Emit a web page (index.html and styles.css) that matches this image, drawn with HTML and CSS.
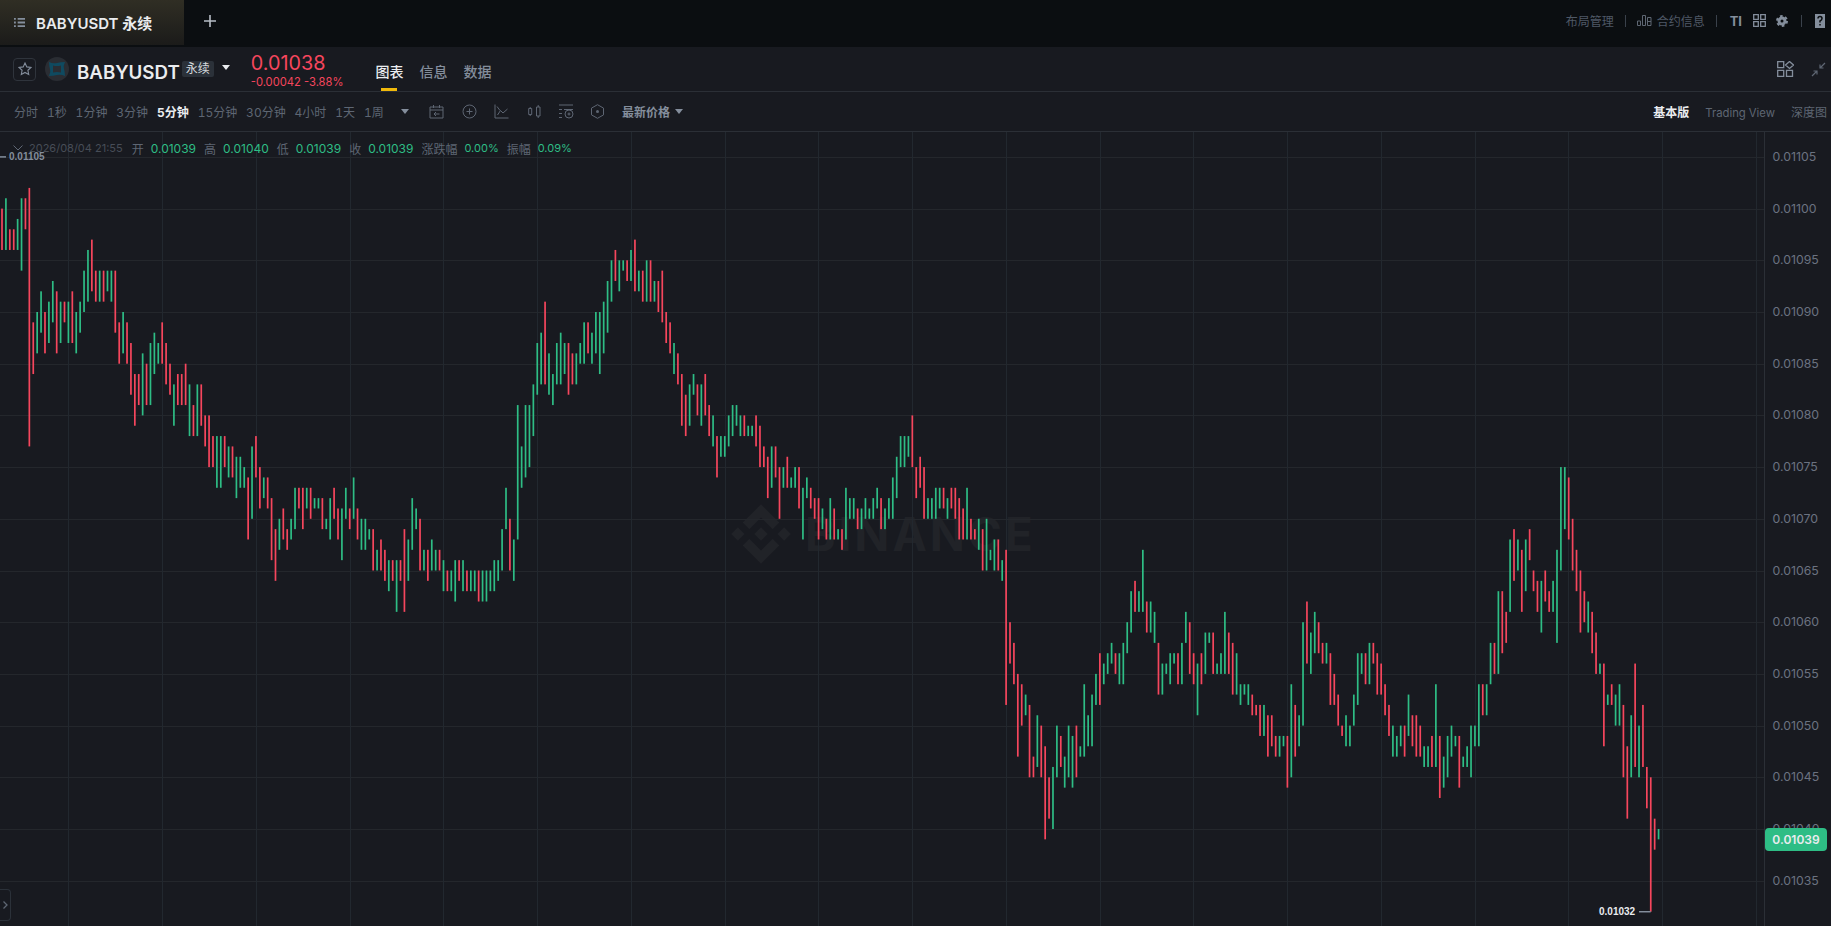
FILE: index.html
```html
<!DOCTYPE html>
<html lang="zh-CN">
  <head>
    <meta charset="UTF-8" />
    <meta name="viewport" content="width=device-width, initial-scale=1.0" />
    <title>BABYUSDT 永续</title>
    <link rel="stylesheet" href="styles.css">
  </head>
  <body>
    <!-- 顶部标签栏 -->
    <div class="topbar">
      <div class="tab">
        <svg class="ico-list" viewBox="0 0 12 11">
          <path d="M0 0.5h2v2H0zM4 0.5h8v2H4zM0 4.5h2v2H0zM4 4.5h8v2H4zM0 8.5h2v2H0zM4 8.5h8v2H4z" />
        </svg>
        <span class="tab-name">BABYUSDT 永续</span>
      </div>
      <svg class="ico-plus" viewBox="0 0 12 12"><path d="M6 0v12M0 6h12" /></svg>
      <div class="top-right">
        <span>布局管理</span>
        <i class="divider"></i>
        <svg class="ico-bars" viewBox="0 0 15 11">
          <path d="M0.5 6h3v4.5h-3zM5.5 0.5h3v10h-3zM10.5 2.5h3.5v8h-3.5zM10.5 6.5h3.5" />
        </svg>
        <span class="info-text">合约信息</span>
        <i class="divider"></i>
        <b class="ti">TI</b>
        <svg class="ico-grid" viewBox="0 0 13 13">
          <path d="M0.7 0.7h4.6v4.6H0.7zM7.7 0.7h4.6v4.6H7.7zM0.7 7.7h4.6v4.6H0.7zM7.7 7.7h4.6v4.6H7.7z" />
        </svg>
        <svg class="ico-gear" viewBox="0 0 12 12">
          <circle class="gear-teeth" cx="6" cy="6" r="5" />
          <circle class="gear-ring" cx="6" cy="6" r="3" />
        </svg>
        <i class="divider"></i>
        <svg class="ico-doc" viewBox="0 0 10 14">
          <path class="doc-back" d="M0 0h10v14H0z" />
          <path class="doc-mark" d="M3 4.5Q3 2.5 5 2.5T7 4.5Q7 6 5 7V8.5M5 10v1.5" />
        </svg>
      </div>
    </div>

    <div class="panel">
      <!-- 合约信息行 -->
      <div class="header">
        <div class="star">
          <svg viewBox="0 0 14 14"><path d="M7 1l1.8 3.9 4.2.5-3.1 2.9.8 4.2L7 10.4l-3.7 2.1.8-4.2L1 5.4l4.2-.5z" /></svg>
        </div>
        <svg class="coin" viewBox="0 0 24 24">
          <circle class="coin-back" cx="12" cy="12" r="12" />
          <path class="coin-mark" d="M4 5q4 2 8 1t8-1q-2 4-1 7t1 7q-4-2-8-1t-8 1q2-4 1-7T4 5zM8 8.500v7q4-1 8 0v-7q-4 1-8 0z" />
        </svg>
        <span class="symbol">BABYUSDT</span>
        <span class="perp">永续</span>
        <i class="caret-white"></i>
        <div class="quote">
          <div class="last-price">0.01038</div>
          <div class="change">-0.00042 -3.88%</div>
        </div>
        <div class="head-tabs">
          <span class="head-tab active">图表</span>
          <span class="head-tab">信息</span>
          <span class="head-tab">数据</span>
        </div>
        <div class="head-right">
          <svg class="ico-layout" viewBox="0 0 17 16">
            <path d="M0.700 0.700h6v6h-6zM12.500 0.500l4 3.500-4 3.500-4-3.500zM0.700 9.300h6v6h-6zM9.500 9.300h6v6h-6z" />
          </svg>
          <svg class="ico-shrink" viewBox="0 0 15 15">
            <path d="M14 1L9 6M9 2.500V6h3.500M1 14l5-5M6 12.500V9H2.500" />
          </svg>
        </div>
      </div>

      <!-- 周期工具栏 -->
      <div class="toolbar">
        <span>分时</span>
        <span>1秒</span>
        <span>1分钟</span>
        <span>3分钟</span>
        <span class="on">5分钟</span>
        <span>15分钟</span>
        <span>30分钟</span>
        <span>4小时</span>
        <span>1天</span>
        <span>1周</span>
        <i class="caret caret-more"></i>
        <svg class="tool first" viewBox="0 0 15 15">
          <path d="M1 3h13v11H1zM1 6h13M4.500 1v3M10.500 1v3M10.500 10H5M7 8l-2 2 2 2" />
        </svg>
        <svg class="tool" viewBox="0 0 15 15">
          <circle cx="7.500" cy="7.500" r="6.500" />
          <path d="M7.500 4.500v6M4.500 7.500h6" />
        </svg>
        <svg class="tool" viewBox="0 0 15 15">
          <path d="M1 0.500V14h13.500M3.500 11L6.500 6.500 9 9l4.500-4M3 2.500l3 4" />
        </svg>
        <svg class="tool" viewBox="0 0 13 15">
          <path d="M0.700 4.500h3v6h-3zM2.200 3v1.500M2.200 10.500V12M8.500 3h3.500v9H8.500zM10.200 1v2M10.200 12v2" />
        </svg>
        <svg class="tool" viewBox="0 0 15 15">
          <path d="M0 1h14M5 5.500h9M0 5.500h3M0 9.500h3M0 13.500h3" />
          <circle cx="10" cy="10" r="4" />
          <path d="M10 8.500v3M8.500 10h3" />
        </svg>
        <svg class="tool last" viewBox="0 0 14 15">
          <path d="M7 0.700l6 3.400v6.800l-6 3.400-6-3.400V4.100z" />
          <circle class="dot" cx="7" cy="7.500" r="1.500" />
        </svg>
        <span class="price-type">最新价格</span>
        <i class="caret"></i>
        <div class="views">
          <span class="on">基本版</span>
          <span class="view-latin">Trading View</span>
          <span>深度图</span>
        </div>
      </div>

      <!-- K线区 -->
      <div class="chart">
        <div class="watermark">
          <svg viewBox="0 0 60 60">
            <path d="M18.400 25.200 30 13.600 41.600 25.200 48.300 18.500 30 .2 11.700 18.500zM18.400 34.800 30 46.400 41.600 34.800 48.300 41.500 30 59.800 11.700 41.500zM.2 30 6.900 23.300 13.600 30 6.900 36.700zM46.400 30 53.100 23.300 59.800 30 53.100 36.700zM23.200 30 30 23.200 36.800 30 30 36.800z" />
          </svg>
          <span>BINANCE</span>
        </div>
        <svg class="plot" id="plot"></svg>
        <div class="legend">
          <svg class="ico-fold" viewBox="0 0 10 6"><path d="M0.500 0.500L5 5l4.500-4.500" /></svg>
          <span class="time">2026/08/04 21:55</span>
          <span>开</span><em>0.01039</em>
          <span>高</span><em>0.01040</em>
          <span>低</span><em>0.01039</em>
          <span>收</span><em>0.01039</em>
          <span>涨跌幅</span><em class="pct">0.00%</em>
          <span>振幅</span><em class="pct">0.09%</em>
        </div>
        <div class="price-tag">0.01039</div>
        <div class="side-toggle">
          <svg viewBox="0 0 5 8"><path d="M0.500 0.500L4 4 0.500 7.500" /></svg>
        </div>
      </div>
    </div>
    <script src="chart.js"></script>
  </body>
</html>
```

FILE: styles.css
```css
* {
  margin: 0;
  padding: 0;
  box-sizing: border-box;
}
html,
body {
  height: 100%;
  overflow: hidden;
}
body {
  display: flex;
  flex-direction: column;
  background-color: #0b0e11;
  font-family: Inter, "Noto Sans CJK SC", sans-serif;
  font-size: 12px;
  color: #848e9c;
}
svg {
  display: block;
  flex: none;
}
i,
em {
  font-style: normal;
}

/* 顶部标签栏 */
.topbar {
  display: flex;
  align-items: flex-start;
  height: 47px;
  flex: none;
}
.tab {
  display: flex;
  align-items: center;
  width: 184px;
  height: 45px;
  padding-left: 14px;
  background: linear-gradient(#302e24, #1b1b1a);
}
.ico-list {
  width: 11px;
  height: 11px;
  fill: #848e9c;
}
.tab-name {
  margin-left: 11px;
  font-size: 15px;
  font-weight: 600;
  color: #eaecef;
}
.ico-plus {
  width: 12px;
  height: 12px;
  margin: 15px 0 0 20px;
  fill: none;
  stroke: #b7bdc6;
  stroke-width: 1.600;
}
.top-right {
  display: flex;
  align-items: center;
  gap: 11px;
  height: 41px;
  margin-left: auto;
  padding-right: 6px;
  color: #4f5866;
}
.divider {
  width: 1px;
  height: 12px;
  background-color: #3a414b;
}
.ico-bars {
  width: 15px;
  height: 11px;
  margin-right: -6px;
  fill: none;
  stroke: #5e6673;
}
.ti {
  margin-left: 2px;
  font-size: 13px;
  font-weight: 700;
  color: #848e9c;
}
.ico-grid {
  width: 13px;
  height: 13px;
  fill: none;
  stroke: #848e9c;
  stroke-width: 1.300;
}
.ico-gear {
  width: 12px;
  height: 12px;
  margin: 0 2px 0 -1px;
}
.gear-teeth {
  fill: none;
  stroke: #848e9c;
  stroke-width: 2;
  stroke-dasharray: 2.600 2.630;
}
.gear-ring {
  fill: #0b0e11;
  stroke: #848e9c;
  stroke-width: 3;
}
.ico-doc {
  width: 10px;
  height: 14px;
  margin-left: 2px;
}
.doc-back {
  fill: #848e9c;
}
.doc-mark {
  fill: none;
  stroke: #0b0e11;
  stroke-width: 1.500;
}

/* 面板 */
.panel {
  display: flex;
  flex-direction: column;
  flex: 1;
  min-height: 0;
  background-color: #181a20;
}
.header {
  display: flex;
  align-items: center;
  height: 45px;
  flex: none;
  padding-left: 13px;
  border-bottom: 1px solid #2b2f36;
}
.star {
  display: flex;
  align-items: center;
  justify-content: center;
  width: 23px;
  height: 23px;
  margin: 0 9px 0 0;
  border: 1px solid #2f343c;
  border-radius: 4px;
}
.star svg {
  width: 14px;
  height: 14px;
  fill: none;
  stroke: #848e9c;
  stroke-width: 1.100;
}
.coin {
  width: 24px;
  height: 24px;
}
.coin-back {
  fill: #2a2d33;
}
.coin-mark {
  fill: #0f4a60;
  fill-rule: evenodd;
}
.symbol {
  margin: 6px 0 0 8px;
  font-size: 18.700px;
  font-weight: 600;
  color: #eaecef;
}
.perp {
  margin: -1px 0 0 2px;
  padding: 0 4px;
  height: 16px;
  line-height: 16px;
  border-radius: 2px;
  background-color: #2b3139;
  color: #d5d8dc;
}
.caret-white {
  width: 0;
  height: 0;
  margin: -3px 0 0 8px;
  border-left: 4.500px solid transparent;
  border-right: 4.500px solid transparent;
  border-top: 5px solid #eaecef;
}
.quote {
  margin: 3px 0 0 21px;
  color: #f6465d;
}
.last-price {
  font-size: 19.800px;
  line-height: 24px;
}
.change {
  line-height: 15px;
  font-size: 11.200px;
}
.head-tabs {
  display: flex;
  gap: 16px;
  margin: 5px 0 0 32px;
}
.head-tab {
  position: relative;
  height: 39px;
  line-height: 40px;
  font-size: 14px;
  font-weight: 500;
}
.head-tab.active {
  color: #eaecef;
}
.head-tab.active::after {
  content: "";
  position: absolute;
  left: 6px;
  right: 6px;
  bottom: 0;
  height: 3px;
  background-color: #f0b90b;
}
.head-right {
  display: flex;
  align-items: center;
  gap: 17px;
  margin: 0 5px 0 auto;
}
.ico-layout {
  width: 17px;
  height: 16px;
  fill: none;
  stroke: #848e9c;
  stroke-width: 1.300;
}
.ico-shrink {
  width: 15px;
  height: 15px;
  fill: none;
  stroke: #5e6673;
  stroke-width: 1.200;
}

.toolbar {
  display: flex;
  align-items: center;
  gap: 8.900px;
  height: 40px;
  flex: none;
  padding-left: 14px;
  border-bottom: 1px solid #2b2f36;
  color: #5e6673;
  font-variant-numeric: tabular-nums;
}
.toolbar .on {
  color: #eaecef;
  font-weight: 700;
}
.caret {
  width: 0;
  height: 0;
  margin-left: -4px;
  border-left: 4px solid transparent;
  border-right: 4px solid transparent;
  border-top: 5px solid #848e9c;
}
.caret-more {
  margin-left: 8px;
}
.tool {
  width: 15px;
  height: 15px;
  margin-left: 8.600px;
  fill: none;
  stroke: #5e6673;
}
.tool.first {
  margin-left: 11.600px;
}
.tool.last {
  margin-left: 6.600px;
}
.tool .dot {
  fill: #5e6673;
  stroke: none;
}
.price-type {
  margin-left: 8.600px;
  font-weight: 600;
  color: #848e9c;
}
.views {
  display: flex;
  align-items: baseline;
  gap: 16px;
  margin-left: auto;
  padding-right: 4px;
}
.view-latin {
  font-size: 11.300px;
}

/* K线区 */
.chart {
  position: relative;
  flex: 1;
  min-height: 0;
}
.plot {
  position: absolute;
  top: 0;
  left: 0;
  width: 100%;
  height: 100%;
}
.watermark {
  position: absolute;
  left: 731px;
  top: 372px;
  display: flex;
  align-items: center;
  gap: 14px;
  font-size: 46px;
  line-height: 60px;
  font-weight: 700;
  letter-spacing: 3px;
  color: #212328;
}
.watermark svg {
  width: 60px;
  height: 60px;
  fill: #212328;
}
.legend {
  position: absolute;
  left: 13px;
  top: 8px;
  display: flex;
  align-items: center;
  height: 16px;
  color: #5e6673;
}
.legend span {
  margin-right: 7px;
}
.legend em {
  margin-right: 8px;
  color: #2ebd85;
}
.legend .pct {
  font-size: 11px;
}
.legend .time {
  margin-right: 9px;
  font-size: 11px;
  color: #474d57;
}
.ico-fold {
  width: 10px;
  height: 6px;
  margin-right: 6px;
  fill: none;
  stroke: #5e6673;
}
.price-tag {
  position: absolute;
  left: 1765px;
  top: 696px;
  width: 62px;
  height: 23px;
  line-height: 23px;
  text-align: center;
  border-radius: 4px;
  background-color: #2ebd85;
  font-weight: 600;
  color: #eaecef;
}
.side-toggle {
  position: absolute;
  left: 0;
  bottom: 5px;
  display: flex;
  align-items: center;
  justify-content: center;
  width: 11px;
  height: 32px;
  border: 1px solid #2b3139;
  border-left: 0;
  border-radius: 0 4px 4px 0;
}
.side-toggle svg {
  width: 5px;
  height: 8px;
  fill: none;
  stroke: #5e6673;
  stroke-width: 1.300;
}

/* svg内容由chart.js生成 */
.grid-h {
  stroke: #24272c;
}
.grid-v {
  stroke: #22282f;
}
.axis-line {
  stroke: #2b2f36;
}
.axis-text {
  font-size: 12.300px;
  fill: #6b7280;
}
.bar-g {
  fill: #2ebd85;
}
.bar-r {
  fill: #f6465d;
}
.mark-line {
  stroke: #848e9c;
  stroke-width: 1.500;
}
.mark-text {
  font-family: "Liberation Sans", sans-serif;
  font-size: 10px;
  font-weight: 700;
}
.mark-high {
  fill: #848e9c;
}
.mark-low {
  fill: #eaecef;
}
```

FILE: chart.js
```js
// 高低价 单位0.00001 减去1000，g涨 r跌
const raw = `
r100-96 g101-96 r98-96 r98-96 g99-96 g101-94 r101-98 r102-77
r89-84 g90-86 g92-88 r90-86 g91-87 g93-89 r92-86 g91-87
r91-89 g91-87 r92-87 g90-86 g91-88 g94-90 g96-91 r97-92
r94-91 g94-91 r94-91 g94-92 g94-91 r94-88 r89-85 g90-86
r89-85 r87-82 r84-79 r84-81 g86-80 r85-81 g87-81 g88-84
g87-85 r89-85 r87-83 r85-82 g83-79 r84-81 r84-81 r85-81
g83-78 r81-78 g83-78 r83-79 r80-77 r80-75 r78-75 g78-73
g78-73 r78-75 g77-74 r77-74 g76-72 g76-73 g75-73 r74-68
g77-70 r78-74 r75-71 g74-72 r74-71 r72-66 r69-64 g70-67
r71-68 r69-67 g70-68 g73-69 r73-71 r73-69 g73-71 r73-70
g72-71 g72-71 r72-69 g70-69 g72-68 r73-70 r71-68 g71-66
g73-70 r71-69 g74-70 r71-68 g70-67 g70-67 g69-68 r69-65
g67-65 r68-65 r67-64 g66-63 r66-64 g66-61 r66-64 r69-61
g68-64 g72-67 g71-69
r70-65 g67-65 r67-64 g68-65 g67-65 r67-65 g66-63 r65-63
g65-63 g66-62 r66-64 g66-63 r65-63 g65-63 g65-63 r65-62
g65-62 g65-62 g65-63 g66-63 g66-64 g69-65 g73-69 r70-65
g68-64 g81-68 g77-73 g81-74 g81-75 g83-78 g87-82 g88-83
r91-83 g86-82 g84-81 g87-83 g88-83 g87-84 r87-82 r86-83
g86-83 g87-85 g89-85 r89-86 g88-85 g90-86 g90-84 g91-86
g93-88 g95-91 r96-93 g95-92 g95-94 r95-93 g96-93 r97-92
g94-92 r94-91 g95-91 r95-91 g93-91 r93-90 r94-89 r90-87
r89-86 g87-84 r86-83 r84-79 r82-78 g83-79 g84-82 r83-80
g83-79 r84-80 r81-78 g80-77 r78-74 g78-76 g78-76 g80-77
g81-78 g81-79 g80-78 r80-78 g79-78 g79-78 r80-77 r79-75
r77-75 r76-72 g77-73 r77-74 r75-70 g75-73 r76-73 g74-73
g75-73 r75-71 g73-68 g74-72 r73-71 r72-70 r72-68 g71-69
r70-68 g72-68 r71-68 g69-68
r69-67 g73-68 g72-70 g72-70 r71-69 g71-69 g72-70 g71-70
g72-70 g73-71 r72-69 g71-69 g72-70 g74-70 g76-72 g78-75
g78-75 g78-76 r80-75 r75-72 r76-73 r75-70 g72-70 g72-70
g73-70 g73-71 r73-71 g72-70 r73-71 r73-70 r72-68 r71-68
g73-68 r70-68 r69-68 g70-67 r69-65 g70-65 g67-66 g68-65
r68-65 g66-64 r67-52 r60-56 r58-54 r55-47 r54-50 g53-51
r52-45 r47-45 g51-46 r50-45 r48-39 r45-41 g46-40 g50-45
r49-46 g47-44 g50-45 g49-44 r50-45 g48-47 g54-47 g51-48
g53-48 g55-52 r57-52 g56-54 g57-55 g58-56 r57-55 g57-54
g58-54 g60-57 g63-59 r64-61 g63-61 g67-61 r62-59 g62-59
g61-58 r58-53 g56-53 g56-55 g57-54 g57-56 r57-54 g58-54
g61-58 r60-55 r57-54 g56-51 r57-54 g59-55 g59-58 r59-55
g56-55 g57-55 g61-55 r59-55 r58-53 g57-53 g54-52 g54-53
g54-52 r53-51 r52-51 r52-49
g52-49 r51-47 r51-48 r49-47 g49-47 g49-48 r49-44 g54-45
r52-47 g51-48 g60-50 r62-56 g59-55 g61-57 r60-57 r58-56
g58-56 r57-52 r55-52 r53-50 r50-49 g51-48 g50-48 g53-50
g57-52 g57-55 r57-54 g58-54 r58-56 r57-53 r56-53 r54-51
r52-49 g50-47 g49-47 g50-48 r50-47 g53-49 r51-48 r51-47
r50-47 g48-46 g48-46 r49-46 g54-46 r49-43 g47-44 g49-45
g50-47 g49-48 r49-44
g47-46 g48-46 g50-45 g50-48 g54-48 r54-51 g54-51 g58-54
r58-55 g63-55 r63-57 r61-58 g68-61 r69-64 g68-65 r67-61
g68-63 r69-66 r65-63 r64-61 g64-59 r65-62 r63-61 g64-61
g67-58 g75-65 g75-69 r74-68 r70-65 r67-63 r65-59 r63-60
g62-59 r61-57 r59-55 g56-55 r56-48 g53-52 r54-52 g53-50
g54-50 r52-45 r48-41 g51-45 r56-46 g50-45 r52-46 r46-42
r45-32 r41-38 g40-39
`

const bars = raw.trim().split(/\s+/).map((s) => {
  const [hi, lo] = s.slice(1).split('-').map(Number)
  return { color: s[0], hi: hi + 1000, lo: lo + 1000 }
})

const plot = document.querySelector('#plot')
const chartTop = 132
const axisX = 1764.5

// 价格转y坐标
function priceY(p) {
  return 880.7 - chartTop - (p - 1035) * 10.34
}
function barX(i) {
  return 2 + i * 3.907
}

function render() {
  let html = ''
  // 网格
  for (let p = 1035; p <= 1105; p += 5) {
    const y = Math.round(priceY(p)) + 0.5
    html += `<line class="grid-h" x1="0" x2="${axisX}" y1="${y}" y2="${y}" />`
    html += `<text class="axis-text" x="1772.500" y="${y + 3.5}">0.0${p}</text>`
  }
  for (let i = 0; i < 19; i++) {
    const x = Math.round(68.3 + i * 93.76) + 0.5
    html += `<line class="grid-v" x1="${x}" x2="${x}" y1="0" y2="794" />`
  }
  html += `<line class="axis-line" x1="${axisX}" x2="${axisX}" y1="0" y2="794" />`
  // K线
  html += bars.map((b, i) => {
    const y = priceY(b.hi)
    const h = priceY(b.lo) - y
    return `<rect class="bar-${b.color}" x="${barX(i) - 0.85}" y="${y}" width="1.7" height="${h}" />`
  }).join('')
  // 最高最低标注
  const yHigh = priceY(1105)
  const yLow = priceY(1032)
  html += `<line class="mark-line" x1="0" x2="6" y1="${yHigh}" y2="${yHigh}" />`
  html += `<text class="mark-text mark-high" x="9" y="${yHigh + 3.5}">0.01105</text>`
  html += `<line class="mark-line" x1="1639" x2="1650.700" y1="${yLow}" y2="${yLow}" />`
  html += `<text class="mark-text mark-low" x="1599" y="${yLow + 3.5}">0.01032</text>`
  plot.innerHTML = html
}
render()
```
